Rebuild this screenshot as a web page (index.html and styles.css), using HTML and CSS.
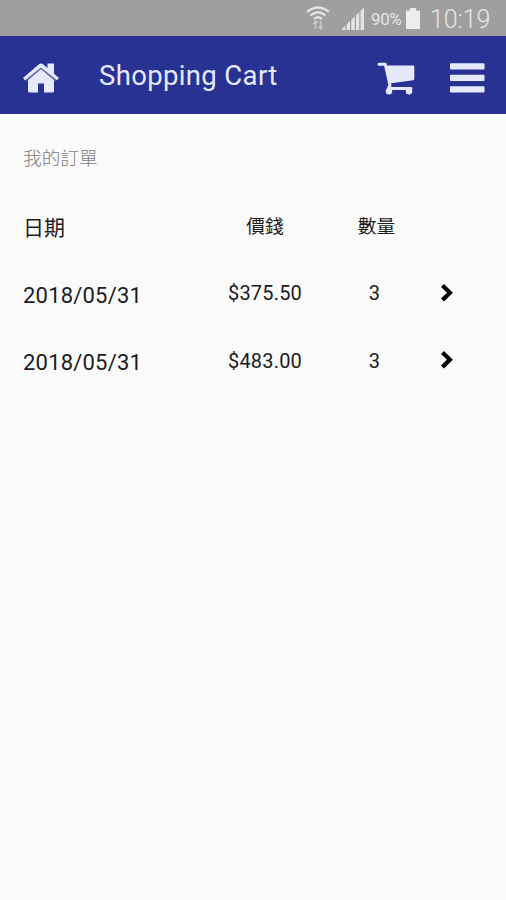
FILE: index.html
```html
<!DOCTYPE html>
<html lang="zh-Hant">
<head>
<meta charset="utf-8">
<title>Shopping Cart</title>
<link rel="stylesheet" href="styles.css">
</head>
<body>
<div class="status">
  <svg class="wifi" width="26" height="26" viewBox="0 0 26 26" fill="none" stroke="#e4e4e4" stroke-width="2.2">
    <path d="M2 8Q13-1 24 8M5.500 11.500Q13 5 20.500 11.500M9 15Q13 11.500 17 15"/>
    <path d="M10.500 17v8M8.500 20l2-3 2 2.500M15.500 17v8M13.500 22.500l2 2.500 2-2.500" stroke="#c8c8c8" stroke-width="1.500"/>
  </svg>
  <svg class="signal" width="23" height="24" viewBox="0 0 23 24" fill="#e4e4e4">
    <path d="M0 23v-1l3.500-3.500V23zM4.700 23v-5.500L8 14v9zM9.300 23V13l3.500-3.500V23zM14 23V8.500L17.300 5v18zM18.500 23V4L22 .5V23z"/>
  </svg>
  <span class="percent">90%</span>
  <svg class="battery" width="14" height="22" viewBox="0 0 14 22" fill="#ededed"><path d="M4 0h6v2.500h4V21H0V2.500h4z"/></svg>
  <span class="clock">10:19</span>
</div>
<header class="bar">
  <svg class="home" width="36" height="30" viewBox="0 0 36 30" fill="#e6e8fb">
    <path d="M5 17L18 6l13 11V28q0 1.500-1.500 1.500H21v-9h-6v9H6.500Q5 29.500 5 28z"/>
    <path d="M3 17.500L18 5l15 12.500" fill="none" stroke="#6870b4" stroke-width="1.500"/>
    <path d="M0 15L16 1.200q2-1.600 4 0l4.500 3.900V.5H31v10.300l5 4.200-2 2.300L18 4.500 2 17.300z"/>
  </svg>
  <h1 class="title">Shopping Cart</h1>
  <svg class="cart" width="38" height="34" viewBox="0 0 38 34">
    <path d="M2 2.200h6.300L13 23.500q-1.800 1.500-1.500 3H34" fill="none" stroke="#e6e8fb" stroke-width="3" stroke-linecap="round" stroke-linejoin="round"/>
    <path d="M8.500 3.500H36q1.300 0 1.300 1.300v12q0 1.200-1.300 1.400L12.500 21.500z" fill="#e6e8fb"/>
    <circle cx="12" cy="29.300" r="3.200" fill="#e6e8fb"/><circle cx="32" cy="29.300" r="3.200" fill="#e6e8fb"/>
  </svg>
  <svg class="menu" width="35" height="30" viewBox="0 0 35 30" fill="#e6e8fb">
    <rect width="34.500" height="6.300" y=".3" rx=".8"/><rect y="11.700" width="34.500" height="6.300" rx=".8"/><rect y="23.200" width="34.500" height="6.300" rx=".8"/>
  </svg>
</header>
<main class="orders">
  <h2 class="heading">我的訂單</h2>
  <div class="row head"><span class="date">日期</span><span class="cell">價錢</span><span class="cell quantity">數量</span></div>
  <div class="row"><span class="date">2018/05/31</span><span class="cell">$375.50</span><span class="cell">3</span>
    <svg class="chevron" width="14" height="20" viewBox="0 0 14 20"><path d="M2.500 2.500L9.900 9.700 2.500 16.900" fill="none" stroke="#000" stroke-width="4.200"/></svg></div>
  <div class="row"><span class="date">2018/05/31</span><span class="cell">$483.00</span><span class="cell">3</span>
    <svg class="chevron" width="14" height="20" viewBox="0 0 14 20"><path d="M2.500 2.500L9.900 9.700 2.500 16.900" fill="none" stroke="#000" stroke-width="4.200"/></svg></div>
</main>
</body>
</html>
```
FILE: styles.css
```css
* { box-sizing: border-box; }
body {
  margin: 0;
  min-height: 900px;
  background: #fafafa;
  color: #1c1c1c;
  font-family: Roboto, "Noto Sans CJK TC", sans-serif;
}
.status {
  display: flex;
  align-items: flex-start;
  justify-content: flex-end;
  height: 36px;
  padding-right: 15px;
  background: #9f9f9f;
  color: #e6e6e6;
}
.wifi { margin: 4px 11px 0 0; }
.signal { margin: 7px 6px 0 0; }
.percent { width: 32px; margin-right: 3px; font-size: 17px; line-height: 20px; padding-top: 9px; letter-spacing: -0.4px; }
.battery { margin: 8px 10px 0 0; }
.clock { width: 61px; font-size: 25px; line-height: 30px; padding-top: 5px; font-weight: 350; letter-spacing: -0.1px; white-space: nowrap; }
.bar {
  display: flex;
  align-items: flex-start;
  height: 78px;
  padding-left: 23px;
  background: #283293;
}
.home { margin-top: 27px; }
.title {
  width: 278px;
  margin: 24px 0 0 40px;
  color: #e6e8fb;
  font-size: 27.5px;
  font-weight: 400;
  line-height: 32px;
  letter-spacing: 0.35px;
}
.cart { margin-top: 26px; }
.menu { margin: 27px 0 0 35px; }
.orders { padding: 0 23px; }
.heading {
  margin: 31px 0 20px;
  color: #7c7c7c;
  font-size: 18.7px;
  font-weight: 300;
  line-height: 28px;
}
.row {
  display: grid;
  grid-template-columns: 187px 110px 109px 36px;
  align-items: center;
  height: 67.5px;
}
.date { font-size: 22px; letter-spacing: 0.2px; padding-top: 2px; }
.cell { font-size: 20px; text-align: center; letter-spacing: 0.2px; padding-bottom: 2px; }
.head .date { font-size: 21px; letter-spacing: 0; padding-top: 0; padding-bottom: 1px; }
.head .cell { font-size: 18.7px; letter-spacing: 0; padding-bottom: 4px; }
.head .quantity { padding-left: 4px; }
.chevron { margin: 0 0 3px 11px; }
```
